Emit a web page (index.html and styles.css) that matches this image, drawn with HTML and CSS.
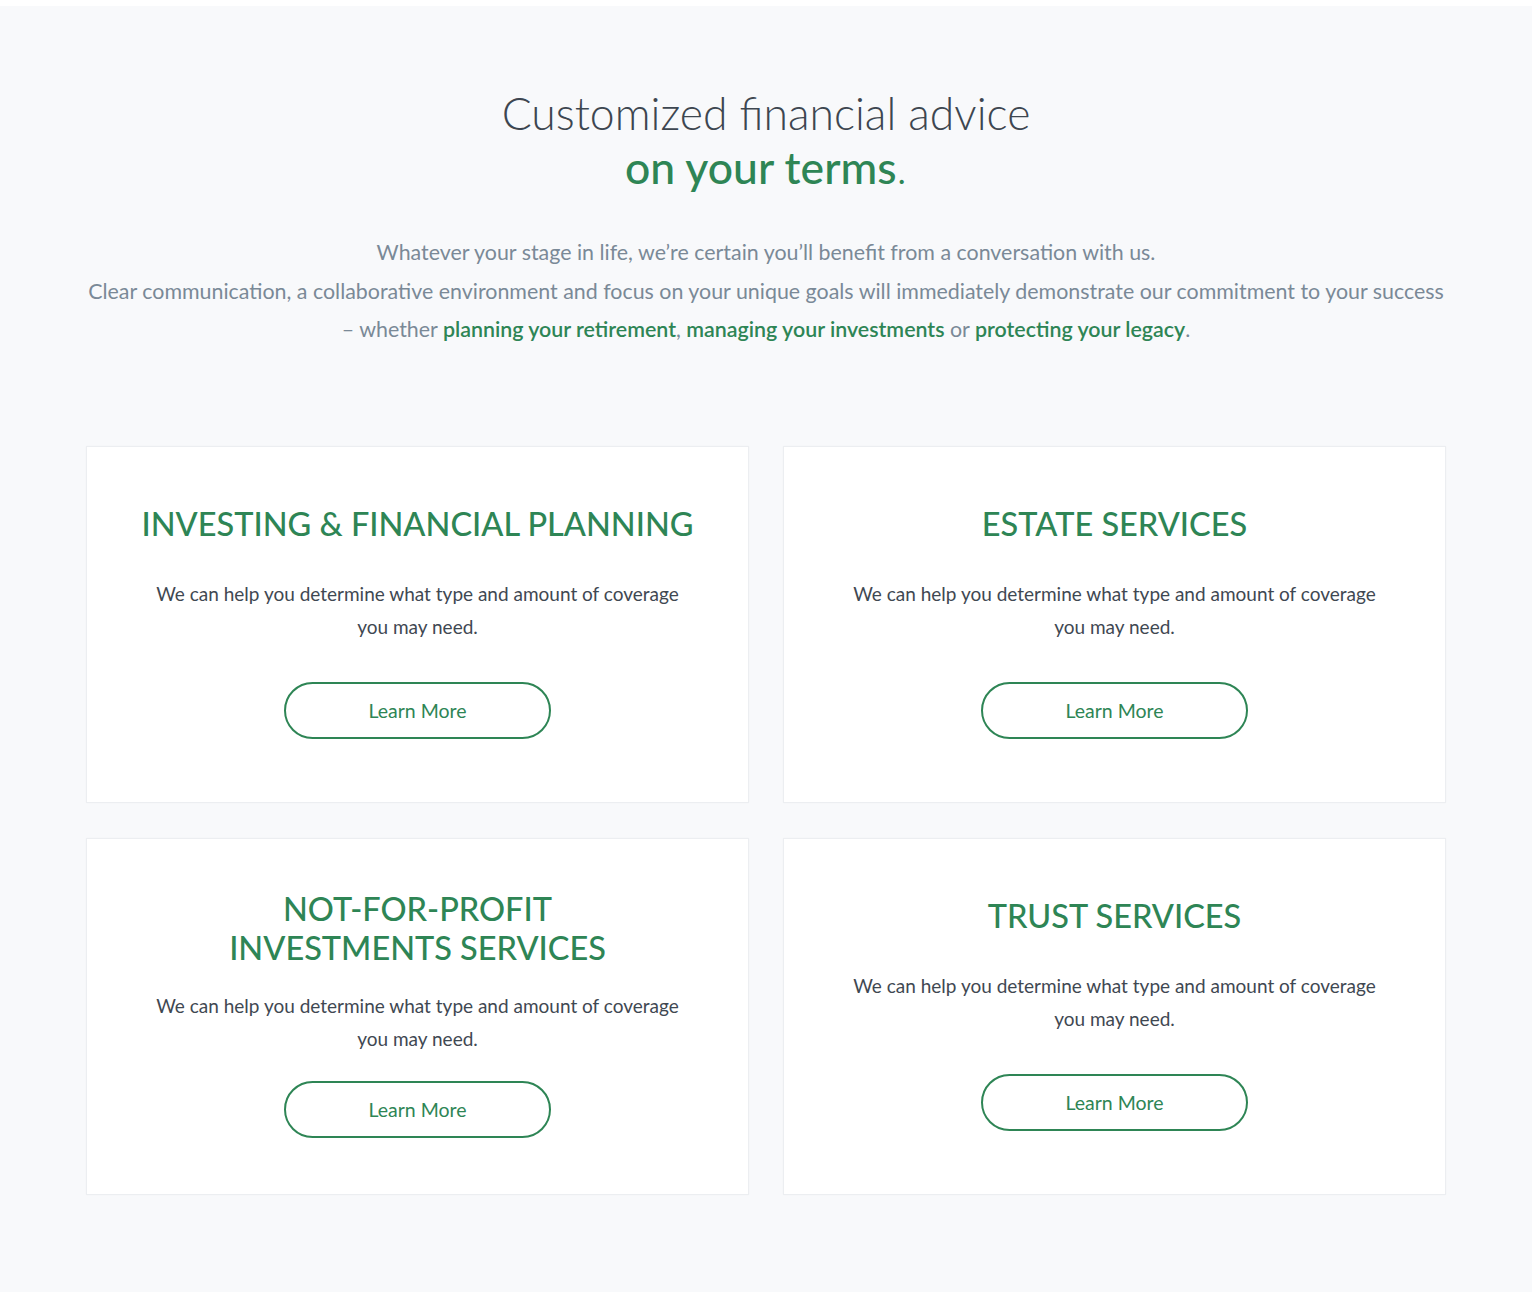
FILE: index.html
```html
<!DOCTYPE html>
<html lang="en">
<head>
    <meta charset="UTF-8">
    <meta name="viewport" content="width=device-width, initial-scale=1.0">
    <title>Customized financial advice</title>
    <link rel="stylesheet" href="styles.css">
</head>
<body>

    <div class="page">
        <section class="services">
            <h1 class="services-title">
                Customized financial advice<br>
                <span class="accent"><strong>on your terms</strong>.</span>
            </h1>

            <p class="services-intro">
                Whatever your stage in life, we’re certain you’ll benefit from a conversation with us.<br>
                Clear communication, a collaborative environment and focus on your unique goals will immediately demonstrate our commitment to your success<br>
                – whether <a href="#">planning your retirement</a>, <a href="#">managing your investments</a> or <a href="#">protecting your legacy</a>.
            </p>

            <div class="card-grid">
                <!-- Service cards -->
                <div class="card">
                    <h2 class="card-title">INVESTING &amp; FINANCIAL PLANNING</h2>
                    <p class="card-text">We can help you determine what type and amount of coverage you may need.</p>
                    <a href="#" class="btn-outline">Learn More</a>
                </div>

                <div class="card">
                    <h2 class="card-title">ESTATE SERVICES</h2>
                    <p class="card-text">We can help you determine what type and amount of coverage you may need.</p>
                    <a href="#" class="btn-outline">Learn More</a>
                </div>

                <div class="card">
                    <h2 class="card-title">NOT-FOR-PROFIT<br>INVESTMENTS SERVICES</h2>
                    <p class="card-text">We can help you determine what type and amount of coverage you may need.</p>
                    <a href="#" class="btn-outline">Learn More</a>
                </div>

                <div class="card">
                    <h2 class="card-title">TRUST SERVICES</h2>
                    <p class="card-text">We can help you determine what type and amount of coverage you may need.</p>
                    <a href="#" class="btn-outline">Learn More</a>
                </div>
            </div>
        </section>
    </div>

</body>
</html>
```

FILE: styles.css
```css
body {
    margin: 0;
    font-family: Lato, "Open Sans", sans-serif;
    background: #fdfdfd;
    color: #3f4852;
}

.page {
    padding-top: 6px;
    padding-bottom: 20px;
    background: #ffffff;
}

.services {
    background: #f8f9fb;
    padding: 80px 20px 97px;
    text-align: center;
}

.services-title {
    margin: 0;
    font-size: 44.5px;
    font-weight: 300;
    line-height: 54px;
    color: #3d4650;
}

.services-title .accent {
    color: #2e8555;
}

.services-title strong {
    font-weight: 500;
}

.services-intro {
    margin: 39px auto 0;
    font-size: 21.4px;
    line-height: 38.5px;
    color: #7a8997;
}

.services-intro a {
    color: #2e8555;
    font-weight: 600;
    text-decoration: none;
}

.card-grid {
    width: 1360px;
    margin: 97px auto 0;
    display: grid;
    grid-template-columns: 1fr 1fr;
    column-gap: 34px;
    row-gap: 35px;
}

.card {
    box-sizing: border-box;
    height: 357px;
    padding: 40px 40px 45px;
    background: #ffffff;
    border: 1px solid #eceef1;
    box-shadow: 0 0 2px rgba(0, 0, 0, 0.03);
    display: flex;
    flex-direction: column;
    justify-content: space-around;
    align-items: center;
}

.card-title {
    margin: 0;
    font-size: 32.5px;
    font-weight: 500;
    line-height: 39px;
    color: #2e8555;
}

.card-text {
    max-width: 540px;
    margin: 0 0 4px;
    font-size: 19px;
    line-height: 33px;
    color: #3f4852;
}

.btn-outline {
    box-sizing: border-box;
    width: 267px;
    height: 57px;
    display: flex;
    align-items: center;
    justify-content: center;
    border: 2px solid #2e8555;
    border-radius: 30px;
    font-size: 19.5px;
    color: #2e8555;
    text-decoration: none;
}
```
